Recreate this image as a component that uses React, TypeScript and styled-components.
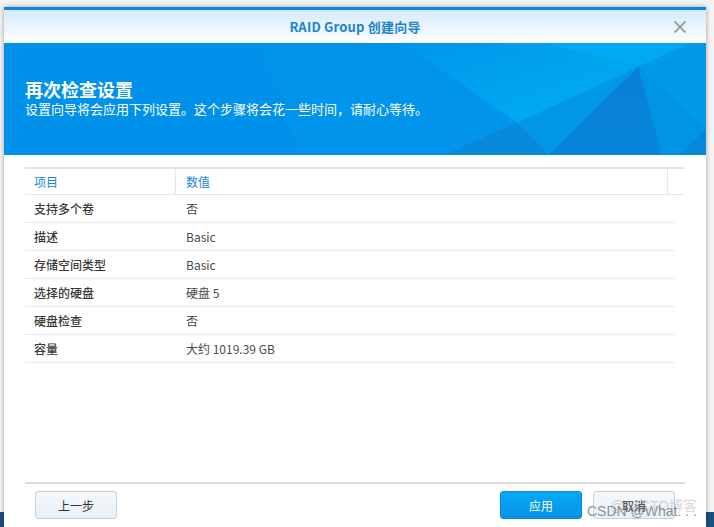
import React from "react";
import styled, { createGlobalStyle } from "styled-components";

const Global = createGlobalStyle`
  html, body {
    margin: 0;
    padding: 0;
    height: 100%;
    overflow: hidden;
    background: linear-gradient(to bottom, #f4f4f4 0, #f4f4f4 512px, #1d4f7e 512px);
    font-family: "Noto Sans CJK SC", "Noto Sans", "Liberation Sans", sans-serif;
  }
`;

const Stage = styled.div`
  position: relative;
  width: 714px;
  height: 527px;
  padding: 7px 8px 0 4px;
  box-sizing: border-box;
`;

const Window = styled.div`
  width: 702px;
  height: 520px;
  background: #fff;
  display: flex;
  flex-direction: column;
  box-shadow: 0 0 5px rgba(0, 0, 0, 0.35);
  border-top: 3px solid #0a86e2;
  box-sizing: border-box;
`;

const TitleBar = styled.div`
  height: 33px;
  display: flex;
  align-items: center;
  justify-content: center;
  position: relative;
  background: linear-gradient(to bottom, #d4eaf9 0%, #ffffff 100%);
`;

const Title = styled.div`
  font-size: 13px;
  font-weight: 700;
  color: #1a84d6;
  letter-spacing: 0.2px;
`;

const Close = styled.button`
  position: absolute;
  right: 19px;
  top: 10px;
  width: 14px;
  height: 14px;
  padding: 0;
  border: 0;
  background: none;
  display: flex;
`;

const Banner = styled.div`
  position: relative;
  height: 112px;
  background: #0092ea;
  overflow: hidden;
  display: flex;
  flex-direction: column;
  justify-content: center;
  padding: 0 21px 2px;
  box-sizing: border-box;
`;

const BannerArt = styled.svg`
  position: absolute;
  left: 0;
  top: 0;
`;

const BannerTitle = styled.div`
  position: relative;
  color: #fff;
  font-size: 18px;
  font-weight: 700;
  line-height: 22px;
`;

const BannerText = styled.div`
  position: relative;
  color: #fff;
  font-size: 13px;
  line-height: 18px;
`;

const Body = styled.div`
  flex: 1;
  padding: 12px 21px 0;
  display: flex;
  flex-direction: column;
`;

const Grid = styled.div`
  flex: 1;
  display: flex;
  flex-direction: column;
`;

const HeadRow = styled.div`
  display: grid;
  grid-template-columns: 151px 492px 17px;
  height: 25px;
  border-top: 2px solid #dbe5ed;
  border-bottom: 1px solid #e2ebf2;
`;

const HeadCell = styled.div<{ $divider?: boolean }>`
  font-size: 12px;
  color: #1a86d8;
  display: flex;
  align-items: center;
  padding-left: ${(p) => (p.$divider ? "9px" : "0")};
  border-right: ${(p) => (p.$divider ? "1px solid #dbe8f2" : "0")};
  &:nth-child(2) {
    padding-left: 10px;
  }
`;

const Row = styled.div`
  display: grid;
  grid-template-columns: 151px 1fr;
  width: 650px;
  height: 27px;
  border-bottom: 1px solid #e4ecf2;
`;

const Label = styled.div`
  font-size: 12px;
  color: #3a3a3a;
  display: flex;
  align-items: center;
  padding-left: 9px;
  font-weight: 500;
`;

const Value = styled.div`
  font-size: 12px;
  color: #4a4a4a;
  display: flex;
  align-items: center;
  padding-left: 10px;
`;

const Footer = styled.div`
  border-top: 2px solid #dcdcdc;
  height: 45px;
  display: flex;
  align-items: flex-start;
  padding: 7px 10px 0 10px;
  box-sizing: border-box;
  gap: 11px;
`;

const Button = styled.button<{ $primary?: boolean }>`
  width: 82px;
  height: 28px;
  border-radius: 3px;
  font-family: inherit;
  font-size: 12px;
  border: 1px solid ${(p) => (p.$primary ? "#0a88d8" : "#c4d3df")};
  color: ${(p) => (p.$primary ? "#fff" : "#333")};
  background: ${(p) =>
    p.$primary
      ? "linear-gradient(to bottom, #05aaf6, #0a92e8)"
      : "linear-gradient(to bottom, #f4f8fb, #e9f1f8)"};
`;

const Spacer = styled.div`
  flex: 1;
`;

const Watermark = styled.div<{ $faint?: boolean }>`
  position: absolute;
  font-family: "Liberation Sans", "Noto Sans CJK SC", sans-serif;
  font-size: 14px;
  color: ${(p) => (p.$faint ? "rgba(140,140,140,0.35)" : "rgba(110,110,110,0.75)")};
  pointer-events: none;
  white-space: nowrap;
`;

const rows: [string, string][] = [
  ["支持多个卷", "否"],
  ["描述", "Basic"],
  ["存储空间类型", "Basic"],
  ["选择的硬盘", "硬盘 5"],
  ["硬盘检查", "否"],
  ["容量", "大约 1019.39 GB"],
];

const Art = () => (
  <BannerArt width="702" height="112" viewBox="0 0 702 112">
    <defs>
      <linearGradient id="band" x1="0" y1="0" x2="1" y2="1">
        <stop offset="0" stopColor="#0096ec" />
        <stop offset="1" stopColor="#00b0f0" />
      </linearGradient>
      <linearGradient id="dark" x1="0" y1="0" x2="0" y2="1">
        <stop offset="0" stopColor="#0a7fd6" />
        <stop offset="1" stopColor="#0686da" />
      </linearGradient>
    </defs>
    <polygon points="256,0 400,0 513,80 440,112 296,112" fill="#0094ea" />
    <polygon points="400,0 539,0 634,24 513,80" fill="url(#band)" />
    <polygon points="539,0 686,0 634,24" fill="#00a9f2" />
    <polygon points="686,0 702,0 702,87 634,24" fill="#009ae8" />
    <polygon points="634,24 702,87 702,112 658,112" fill="#0094e4" />
    <polygon points="634,24 658,112 544,112" fill="url(#dark)" />
    <polygon points="634,24 544,112 513,80" fill="#0098e6" />
    <polygon points="513,80 544,112 440,112" fill="#0888da" />
    <polygon points="702,87 702,112 676,112" fill="#0688d8" />
  </BannerArt>
);

export default function App() {
  return (
    <>
      <Global />
      <Stage>
        <Window>
          <TitleBar>
            <Title>RAID Group 创建向导</Title>
            <Close aria-label="关闭">
              <svg width="14" height="14" viewBox="0 0 14 14">
                <path d="M1.5 1.5 L12.5 12.5 M12.5 1.5 L1.5 12.5" stroke="#9aa0a6" strokeWidth="1.8" />
              </svg>
            </Close>
          </TitleBar>
          <Banner>
            <Art />
            <BannerTitle>再次检查设置</BannerTitle>
            <BannerText>设置向导将会应用下列设置。这个步骤将会花一些时间，请耐心等待。</BannerText>
          </Banner>
          <Body>
            <Grid>
              <HeadRow>
                <HeadCell $divider>项目</HeadCell>
                <HeadCell $divider>数值</HeadCell>
                <HeadCell />
              </HeadRow>
              {rows.map(([k, v]) => (
                <Row key={k}>
                  <Label>{k}</Label>
                  <Value>{v}</Value>
                </Row>
              ))}
            </Grid>
            <Footer>
              <Button>上一步</Button>
              <Spacer />
              <Button $primary>应用</Button>
              <Button>取消</Button>
            </Footer>
          </Body>
        </Window>
        <Watermark $faint style={{ left: 610, top: 495 }}>@51CTO博客</Watermark>
        <Watermark style={{ left: 587, top: 503 }}>CSDN @What. . .</Watermark>
      </Stage>
    </>
  );
}
